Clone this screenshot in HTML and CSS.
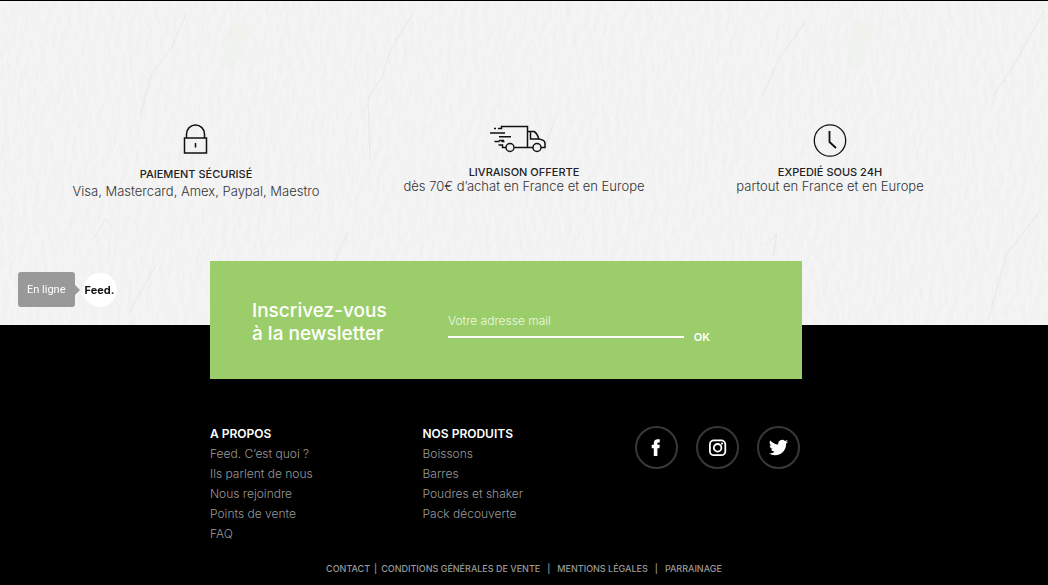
FILE: index.html
```html
<!DOCTYPE html>
<html lang="fr">
<head>
<meta charset="utf-8">
<meta name="viewport" content="width=device-width, initial-scale=1">
<title>Feed.</title>
<link rel="stylesheet" href="styles.css">
</head>
<body>
<main class="services">
  <svg class="texture" aria-hidden="true">
    <filter id="plaster" x="0" y="0" width="100%" height="100%" color-interpolation-filters="sRGB">
      <feTurbulence type="fractalNoise" baseFrequency="0.16 0.07" numOctaves="4" seed="8" result="grain"/>
      <feDiffuseLighting in="grain" surfaceScale="0.5" diffuseConstant="1.1" lighting-color="#f7f7f8">
        <feDistantLight azimuth="200" elevation="62"/>
      </feDiffuseLighting>
    </filter>
    <rect class="plaster" width="100%" height="100%" filter="url(#plaster)"/>
    <g class="cracks">
      <path d="M186 12l-14 34-20 26-12 44M412 14l-22 36-8 26-14 22 2 62M806 20l-26 36-18 40M1044 10l-28 50-22 34M300 300l34-38 14-30M92 240l14-22 8 12M765 245l12-12-4 22M1040 210l-34 44-18 66M130 310l26-46M555 118l-12 34"/>
    </g>
    <g class="moss">
      <path d="M232 22l20 4-16 38-16 4zM856 18l20 6-16 40-14 2z"/>
    </g>
  </svg>
  <div class="services-grid">
    <section class="service service-payment">
      <svg class="service-icon" width="26" height="34" viewBox="0 0 26 34" fill="none" stroke="#111" stroke-width="1.5" aria-hidden="true">
        <path d="M1.500 15h22v15H1.500zM3.500 15V11a9 9 0 0 1 18 0v4M12.500 20v4.500"/>
      </svg>
      <h2 class="service-title">PAIEMENT SÉCURISÉ</h2>
      <p class="service-text">Visa, Mastercard, Amex, Paypal, Maestro</p>
    </section>
    <section class="service">
      <svg class="service-icon" width="70" height="34" viewBox="0 0 70 34" fill="none" stroke="#111" stroke-width="1.500" aria-hidden="true">
        <path d="M5 5.500h2M9 5.500h3.500V3.500H38.500V24.500M1 10h15M10 13.800h12M10 17.500h5M5.500 18.500h5M12.500 18.500h3M9.500 22h4v2.500h3.500M25.500 24.500h18.500M38.500 8.500h6.500c2.500 1.500 4 4 4.800 7.500 4 .5 6.200 2 6.200 4.500v4h-4M41.500 8.500v7.500h8.500"/>
        <circle cx="21" cy="24.500" r="4"/><circle cx="48" cy="24.500" r="4"/>
      </svg>
      <h2 class="service-title">LIVRAISON OFFERTE</h2>
      <p class="service-text">dès 70€ d’achat en France et en Europe</p>
    </section>
    <section class="service">
      <svg class="service-icon" width="34" height="34" viewBox="0 0 34 34" fill="none" stroke="#111" aria-hidden="true">
        <circle cx="17" cy="17.500" r="15.700" stroke-width="1.300"/><path d="M16.500 8v11l6.500 6" stroke-width="1.800"/>
      </svg>
      <h2 class="service-title">EXPEDIÉ SOUS 24H</h2>
      <p class="service-text">partout en France et en Europe</p>
    </section>
  </div>
</main>

<footer class="footer">
  <div class="container">
    <form class="newsletter">
      <h2 class="newsletter-title">Inscrivez-vous<br>à la newsletter</h2>
      <div class="newsletter-field">
        <input class="newsletter-input" type="email" aria-label="Votre adresse mail" placeholder="Votre adresse mail">
        <button class="newsletter-submit" type="submit">OK</button>
      </div>
    </form>
    <div class="footer-columns">
      <nav class="footer-nav" aria-labelledby="about">
        <h3 class="footer-title" id="about">A PROPOS</h3>
        <a href="#">Feed. C’est quoi ?</a>
        <a href="#">Ils parlent de nous</a>
        <a href="#">Nous rejoindre</a>
        <a href="#">Points de vente</a>
        <a href="#">FAQ</a>
      </nav>
      <nav class="footer-nav" aria-labelledby="products">
        <h3 class="footer-title" id="products">NOS PRODUITS</h3>
        <a href="#">Boissons</a>
        <a href="#">Barres</a>
        <a href="#">Poudres et shaker</a>
        <a href="#">Pack découverte</a>
      </nav>
      <div class="social">
        <a href="#" aria-label="Facebook"><svg width="20" height="20" viewBox="0 0 20 20" fill="#fff"><path d="M6.800 18v-7.800H4.700V6.800h2.100V5.200C6.800 2.500 8.200 1.200 10.800 1.200h2v3.300h-1.200c-.9 0-1.200.4-1.200 1.200v1.100h2.400l-.4 3.400h-2V18z"/></svg></a>
        <a href="#" aria-label="Instagram"><svg width="20" height="20" viewBox="0 0 20 20" fill="none" stroke="#fff" stroke-width="1.800"><rect x="1.900" y="2.400" width="15.400" height="14.800" rx="4"/><circle cx="9.600" cy="9.800" r="3.800"/><circle cx="14" cy="5.600" r="1.100" fill="#fff" stroke="none"/></svg></a>
        <a href="#" aria-label="Twitter"><svg width="19" height="19" viewBox="0 0 24 24" fill="#fff"><path d="M23.950 4.570a10 10 0 0 1-2.820.77 4.960 4.960 0 0 0 2.160-2.720c-.95.550-2 .95-3.120 1.180a4.920 4.920 0 0 0-8.380 4.480C7.690 8.100 4.070 6.130 1.640 3.160a4.900 4.900 0 0 0 1.520 6.570 4.900 4.900 0 0 1-2.230-.61v.06a4.920 4.920 0 0 0 3.950 4.830 5 5 0 0 1-2.220.08 4.940 4.940 0 0 0 4.600 3.420A9.870 9.870 0 0 1 0 19.540a13.900 13.900 0 0 0 7.550 2.210c9.050 0 14-7.500 14-13.980 0-.21 0-.42-.02-.63a9.900 9.900 0 0 0 2.460-2.550z"/></svg></a>
      </div>
    </div>
  </div>
  <nav class="legal" aria-label="Informations légales">
    <a href="#">CONTACT</a><span>|</span><a href="#">CONDITIONS GÉNÉRALES DE VENTE</a><span class="wide">|</span><a href="#">MENTIONS LÉGALES</a><span class="wide">|</span><a href="#">PARRAINAGE</a>
  </nav>
</footer>

<button class="chat" type="button">
  <span class="chat-status">En ligne</span>
  <span class="chat-logo">Feed.</span>
</button>
</body>
</html>
```
FILE: styles.css
```css
* {
  box-sizing: border-box;
}

body {
  margin: 0;
  min-height: 100vh;
  display: flex;
  flex-direction: column;
  background: #000;
  color: #222;
  font-family: Inter, "Liberation Sans", sans-serif;
}

h2, h3, p {
  margin: 0;
}

a {
  color: inherit;
  text-decoration: none;
}

.services {
  position: relative;
  padding: 122px 76px 126px 32px;
  border-top: 1px solid #000;
  background: #f4f4f5;
}

.texture {
  position: absolute;
  inset: 0;
  width: 100%;
  height: 100%;
}

.plaster {
  opacity: 0.16;
}

.cracks {
  fill: none;
  stroke: #dcdcde;
  stroke-width: 1;
  opacity: 0.5;
}

.moss {
  fill: #edf1e8;
  opacity: 0.5;
}

.services-grid {
  position: relative;
  display: grid;
  grid-template-columns: 328fr 328fr 284fr;
}

.service {
  display: flex;
  flex-direction: column;
  align-items: center;
  text-align: center;
}

.service-icon {
  margin-bottom: 8px;
}

.service-title {
  font-size: 11px;
  line-height: 14px;
  font-weight: 500;
}

.service-text {
  font-size: 13px;
  line-height: 15px;
  font-weight: 300;
  color: #333;
}

.service-payment .service-icon {
  margin-bottom: 10px;
}

.service-payment .service-text {
  margin-top: 3px;
}

.footer {
  flex: 1;
  padding-bottom: 9px;
  color: #9a9a9a;
}

.container {
  position: relative;
  width: 592px;
  max-width: 100%;
  margin: -64px auto 0;
  right: 18px;
}

.newsletter {
  display: flex;
  align-items: center;
  gap: 62px;
  padding: 38px 92px 34px 42px;
  background: #9bce6a;
  color: #fff;
}

.newsletter-title {
  flex: none;
  width: 134px;
  font-size: 19px;
  line-height: 23px;
  font-weight: 500;
  white-space: nowrap;
}

.newsletter-field {
  flex: 1;
  display: flex;
  align-items: flex-end;
  gap: 10px;
  padding-top: 11px;
}

.newsletter-input {
  flex: 1;
  min-width: 0;
  height: 27px;
  margin-bottom: 6px;
  padding: 0 0 6px;
  border: 0;
  border-bottom: 2px solid #fff;
  border-radius: 0;
  background: none;
  color: #fff;
  font: 300 12px/16px Inter, sans-serif;
}

.newsletter-input::placeholder {
  color: #eef8e4;
  opacity: 1;
}

.newsletter-submit {
  padding: 0;
  border: 0;
  background: none;
  color: #fff;
  font: 600 11px/14px Inter, sans-serif;
  cursor: pointer;
}

.footer-columns {
  display: flex;
  align-items: flex-start;
  padding: 45px 2px 0 0;
}

.footer-nav {
  display: flex;
  flex-direction: column;
  flex: 1 1 0;
  font-size: 12px;
  line-height: 20px;
  font-weight: 300;
}

.footer-title {
  font-size: 12px;
  line-height: 20px;
  font-weight: 600;
  color: #fff;
}

.social {
  display: flex;
  flex: none;
  gap: 18px;
  padding-top: 2px;
}

.social a {
  display: grid;
  place-items: center;
  width: 43px;
  height: 43px;
  border: 2px solid #383838;
  border-radius: 50%;
}

.legal {
  display: flex;
  flex-wrap: wrap;
  justify-content: center;
  gap: 0 4px;
  margin-top: 20px;
  font-size: 9px;
  line-height: 10px;
  font-weight: 500;
}

.legal .wide {
  padding: 0 3px;
}

.chat {
  position: fixed;
  left: 18px;
  bottom: 278px;
  display: flex;
  align-items: center;
  gap: 8px;
  padding: 0;
  border: 0;
  background: none;
  cursor: pointer;
}

.chat-status {
  position: relative;
  padding: 0 9px;
  border-radius: 3px;
  background: #999;
  color: #fff;
  font: 11px/35px Roboto, sans-serif;
}

.chat-status::after {
  content: "";
  position: absolute;
  left: 100%;
  top: 13px;
  border: 5px solid transparent;
  border-left-color: #999;
  border-right: 0;
}

.chat-logo {
  width: 34px;
  border-radius: 50%;
  background: #fff;
  color: #111;
  text-align: center;
  font: 700 11px/34px Inter, sans-serif;
}
```
